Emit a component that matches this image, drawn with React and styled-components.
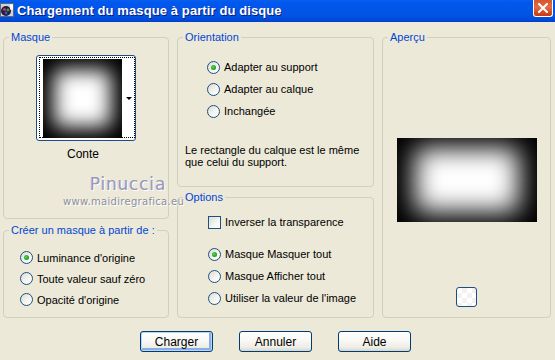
import React from 'react';
import styled, { createGlobalStyle, css } from 'styled-components';

const GlobalStyle = createGlobalStyle`
  html, body {
    margin: 0;
    padding: 0;
    background: #ECE9D8;
  }
  body {
    font-family: "Liberation Sans", Arial, sans-serif;
    font-size: 11px;
    color: #000;
  }
`;

const Window = styled.div`
  width: 555px;
  height: 360px;
  background: #ECE9D8;
  display: flex;
  flex-direction: column;
  overflow: hidden;
`;

const TitleBar = styled.div`
  height: 22px;
  flex: none;
  display: flex;
  align-items: flex-start;
  background: linear-gradient(to bottom, #0A5FEE 0%, #0058EE 8%, #0255E8 40%, #0053E2 75%, #0048D8 92%, #003FC8 100%);
`;

const AppIcon = styled.svg`
  width: 14px;
  height: 16px;
  margin-top: 2px;
  flex: none;
`;

const Title = styled.div`
  margin-left: 3px;
  line-height: 21px;
  font-family: "Liberation Sans", Arial, sans-serif;
  font-weight: bold;
  font-size: 13px;
  letter-spacing: 0.1px;
  color: #fff;
  text-shadow: 1px 1px 0 #0A1E80;
  flex: 1;
`;

const CloseButton = styled.div`
  width: 20px;
  height: 17px;
  margin-right: 2px;
  box-sizing: border-box;
  border: 1px solid #fff;
  border-top: none;
  border-radius: 0 0 3px 3px;
  background: linear-gradient(to bottom, #D9552E 0%, #E26B45 45%, #D4491F 80%, #C33A14 100%);
  display: flex;
  align-items: center;
  justify-content: center;
`;

const Content = styled.div`
  position: relative;
  display: grid;
  grid-template-columns: 166px 197px 169px;
  column-gap: 8px;
  padding: 9px 4px 0 3px;
`;

const Column = styled.div`
  display: flex;
  flex-direction: column;
  gap: ${p => p.$gap || 0}px;
`;

const GroupBox = styled.fieldset`
  margin: 0;
  padding: 0;
  min-width: 0;
  height: ${p => p.$h}px;
  box-sizing: border-box;
  border: 1px solid #D0D0BF;
  border-radius: 4px;
  position: relative;
`;

const Legend = styled.legend`
  margin-left: 5px;
  padding: 0 2px;
  color: #0046D5;
  font-size: 11px;
  line-height: 13px;
`;

const MaskArea = styled.div`
  display: flex;
  flex-direction: column;
  align-items: center;
  padding-top: 11px;
`;

const MaskFrame = styled.div`
  width: 100px;
  height: 86px;
  box-sizing: border-box;
  border: 1px solid #1C4D87;
  border-radius: 3px;
  background: #fff;
  padding: 1px 0 0 2px;
  position: relative;
`;

const FocusRect = styled.div`
  width: 96px;
  height: 81px;
  box-sizing: border-box;
  border: 1px dotted #000;
  padding: 1px 0 0 3px;
`;

const DropArrow = styled.div`
  position: absolute;
  right: 3px;
  top: 41px;
  width: 0;
  height: 0;
  border-left: 3px solid transparent;
  border-right: 3px solid transparent;
  border-top: 3px solid #000;
`;

const MaskName = styled.div`
  margin-top: 6px;
  margin-right: 6px;
  font-size: 12px;
  line-height: 14px;
`;

const Watermark = styled.div`
  position: absolute;
  left: 59px;
  top: 130px;
  display: flex;
  flex-direction: column;
  align-items: flex-end;
  pointer-events: none;
`;

const WatermarkName = styled.div`
  font-family: "DejaVu Sans", sans-serif;
  font-size: 17px;
  line-height: 20px;
  letter-spacing: 0.8px;
  color: #9898B8;
  text-shadow: 1px 1px 0 #fff, -1px 0 0 #D8D8E4;
  margin-right: 18px;
`;

const WatermarkUrl = styled.div`
  font-family: "DejaVu Sans", sans-serif;
  font-size: 10px;
  letter-spacing: 0.3px;
  color: #8E8E9C;
  text-shadow: 1px 1px 0 #fff;
  white-space: nowrap;
  margin-top: 2px;
`;

const Options = styled.div`
  display: flex;
  flex-direction: column;
  padding: ${p => p.$pad};
`;

const Row = styled.div`
  height: ${p => p.$h || 22}px;
  display: flex;
  align-items: center;
  gap: 4px;
  white-space: nowrap;
  ${p => p.$mt && css`margin-top: ${p.$mt}px;`}
`;

const RadioCircle = styled.span`
  width: 13px;
  height: 13px;
  flex: none;
  box-sizing: border-box;
  border-radius: 50%;
  border: 1px solid #1C5180;
  background: linear-gradient(135deg, #DCDBD3 0%, #F4F4F0 55%, #FFFFFF 100%);
  display: flex;
  align-items: center;
  justify-content: center;
  &::after {
    content: "";
    display: ${p => (p.$checked ? 'block' : 'none')};
    width: 5px;
    height: 5px;
    border-radius: 50%;
    background: radial-gradient(circle at 40% 40%, #5BD85B 0%, #21A121 60%, #1A8A1A 100%);
  }
`;

const CheckSquare = styled.span`
  width: 13px;
  height: 13px;
  flex: none;
  box-sizing: border-box;
  border: 1px solid #1C5180;
  background: linear-gradient(135deg, #DCDBD3 0%, #F4F4F0 55%, #FFFFFF 100%);
`;

const Note = styled.div`
  margin-top: 22px;
  padding-left: 7px;
  line-height: 12px;
`;

const PreviewArea = styled.div`
  display: flex;
  flex-direction: column;
  align-items: center;
  padding-top: 94px;
`;

const Swatch = styled.div`
  margin-top: 65px;
  width: 21px;
  height: 20px;
  box-sizing: border-box;
  border: 1px solid #1C4D87;
  border-radius: 3px;
  background-color: #fff;
  background-image: conic-gradient(#F2F2F2 25%, #fff 0 50%, #F2F2F2 0 75%, #fff 0);
  background-size: 10px 10px;
`;

const ButtonBar = styled.div`
  display: flex;
  justify-content: center;
  gap: 26px;
  margin-top: 13px;
  padding-right: 4px;
`;

const Button = styled.button`
  width: 73px;
  height: 21px;
  box-sizing: border-box;
  padding: 0;
  border: 1px solid #003C74;
  border-radius: 3px;
  font-family: "Liberation Sans", Arial, sans-serif;
  font-size: 12px;
  color: #000;
  background: linear-gradient(to bottom, #FFFFFF 0%, #F8F8F5 45%, #EEEDE6 80%, #D8D6CB 100%);
  ${p => p.$default && css`
    box-shadow: inset 0 0 0 1px #BCD4F6, inset -1px -1px 0 2px #89ADE4;
  `}
`;

const BlurMask = ({ id, w, h, x, y, rw, rh, r, blur, base }) => (
  <svg width={w} height={h} style={{ display: 'block' }}>
    <defs>
      <filter id={id} x="-50%" y="-50%" width="200%" height="200%">
        <feGaussianBlur stdDeviation={blur} />
      </filter>
    </defs>
    <rect width={w} height={h} fill={base} />
    <rect x={x} y={y} width={rw} height={rh} rx={r} fill="#fff" filter={`url(#${id})`} />
  </svg>
);

const Radio = ({ checked, children, h }) => (
  <Row $h={h}>
    <RadioCircle $checked={checked} />
    <span>{children}</span>
  </Row>
);

export default function App() {
  return (
    <>
      <GlobalStyle />
      <Window>
        <TitleBar>
          <AppIcon viewBox="0 0 14 16">
            <rect x="0.5" y="1.5" width="13" height="13" fill="#C8D4E0" stroke="#5A6A7A" />
            <circle cx="6" cy="9" r="5" fill="#2A1A3A" />
            <circle cx="4.5" cy="7.5" r="1.6" fill="#C03070" />
            <circle cx="8" cy="8" r="1.4" fill="#40A040" />
            <circle cx="6" cy="11" r="1.4" fill="#3060D0" />
            <rect x="10" y="2.5" width="3" height="5" fill="#fff" />
          </AppIcon>
          <Title>Chargement du masque à partir du disque</Title>
          <CloseButton>
            <svg width="10" height="10" viewBox="0 0 10 10">
              <path d="M1 1 L9 9 M9 1 L1 9" stroke="#fff" strokeWidth="2" strokeLinecap="square" />
            </svg>
          </CloseButton>
        </TitleBar>

        <Content>
          <Column $gap={5}>
            <GroupBox $h={188}>
              <Legend>Masque</Legend>
              <MaskArea>
                <MaskFrame>
                  <FocusRect>
                    <BlurMask id="thumb" base="#000" w={79} h={79} x={11} y={11} rw={57} rh={57} r={5} blur={10} />
                  </FocusRect>
                  <DropArrow />
                </MaskFrame>
                <MaskName>Conte</MaskName>
              </MaskArea>
              <Watermark>
                <WatermarkName>Pinuccia</WatermarkName>
                <WatermarkUrl>www.maidiregrafica.eu</WatermarkUrl>
              </Watermark>
            </GroupBox>
            <GroupBox $h={94}>
              <Legend>Créer un masque à partir de :</Legend>
              <Options $pad="10px 0 0 16px">
                <Radio checked h={21}>Luminance d'origine</Radio>
                <Radio h={21}>Toute valeur sauf zéro</Radio>
                <Radio h={21}>Opacité d'origine</Radio>
              </Options>
            </GroupBox>
          </Column>

          <Column $gap={4}>
            <GroupBox $h={156}>
              <Legend>Orientation</Legend>
              <Options $pad="12px 0 0 29px">
                <Radio checked>Adapter au support</Radio>
                <Radio>Adapter au calque</Radio>
                <Radio>Inchangée</Radio>
              </Options>
              <Note>
                Le rectangle du calque est le même<br />
                que celui du support.
              </Note>
            </GroupBox>
            <GroupBox $h={127}>
              <Legend>Options</Legend>
              <Options $pad="7px 0 0 30px">
                <Row>
                  <CheckSquare />
                  <span>Inverser la transparence</span>
                </Row>
                <Row $mt={10}>
                  <RadioCircle $checked />
                  <span>Masque Masquer tout</span>
                </Row>
                <Radio>Masque Afficher tout</Radio>
                <Radio>Utiliser la valeur de l'image</Radio>
              </Options>
            </GroupBox>
          </Column>

          <Column>
            <GroupBox $h={287}>
              <Legend>Aperçu</Legend>
              <PreviewArea>
                <BlurMask id="preview" base="#000" w={140} h={84} x={18} y={10} rw={104} rh={64} r={6} blur={13} />
                <Swatch />
              </PreviewArea>
            </GroupBox>
          </Column>
        </Content>

        <ButtonBar>
          <Button $default>Charger</Button>
          <Button>Annuler</Button>
          <Button>Aide</Button>
        </ButtonBar>
      </Window>
    </>
  );
}
